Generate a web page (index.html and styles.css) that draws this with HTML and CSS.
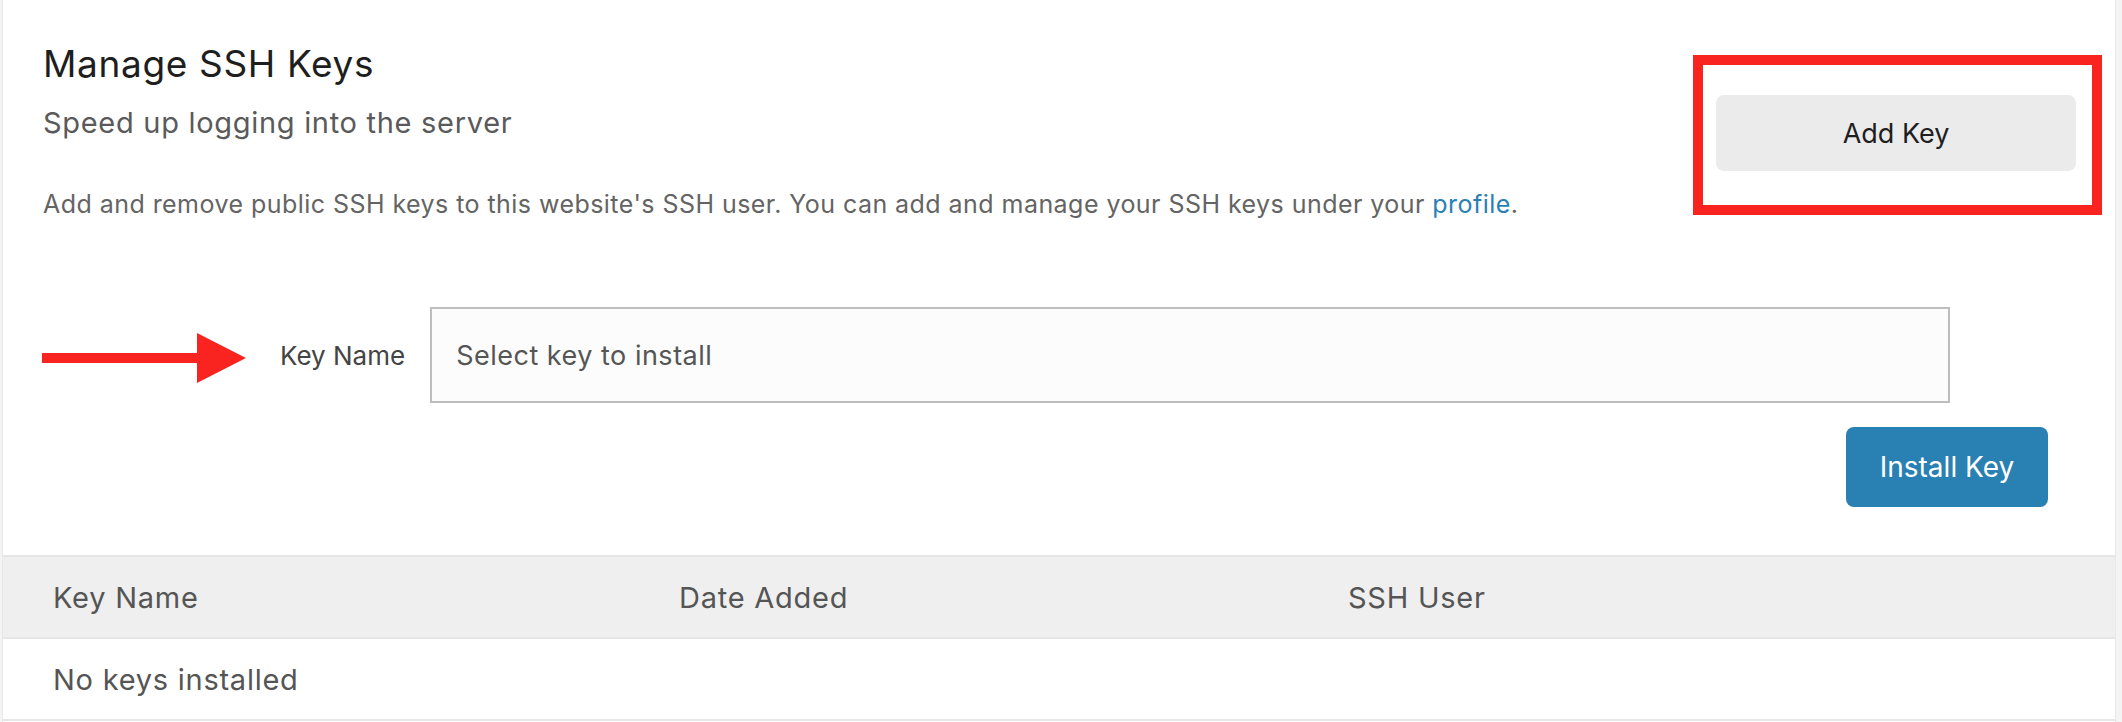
FILE: index.html
```html
<!DOCTYPE html>
<html lang="en">
<head>
<meta charset="utf-8">
<title>Manage SSH Keys</title>
<link rel="stylesheet" href="styles.css">
</head>
<body>
<div class="panel">
  <div class="head">
    <div class="intro">
      <h1 class="title">Manage SSH Keys</h1>
      <h2 class="subtitle">Speed up logging into the server</h2>
      <p class="desc">Add and remove public SSH keys to this website's SSH user. You can add and manage your SSH keys under your <a href="#" class="link">profile</a>.</p>
    </div>
    <div class="add-wrap">
      <button class="btn-add">Add Key</button>
      <div class="highlight"></div>
    </div>
  </div>

  <div class="form-row">
    <svg class="arrow" width="206" height="52" viewBox="0 0 206 52" aria-hidden="true">
      <rect x="0" y="21" width="156" height="10" fill="#f9231f"/>
      <polygon points="155,1 204,26 155,51" fill="#f9231f"/>
    </svg>
    <label class="field-label">Key Name</label>
    <div class="select">Select key to install</div>
  </div>

  <div class="actions">
    <button class="btn-install">Install Key</button>
  </div>

  <div class="table">
    <div class="tr th">
      <div class="cell">Key Name</div>
      <div class="cell">Date Added</div>
      <div class="cell">SSH User</div>
    </div>
    <div class="tr td">
      <div class="cell">No keys installed</div>
    </div>
  </div>
</div>
</body>
</html>
```
FILE: styles.css
```css
* { box-sizing: border-box; }
html, body { margin: 0; padding: 0; }
body {
  background: #f4f4f4;
  font-family: Inter, "Noto Sans", "Liberation Sans", sans-serif;
  width: 2122px;
  height: 722px;
  overflow: hidden;
}
.panel {
  margin-left: 2px;
  width: 2114px;
  height: 722px;
  background: #fff;
  border-left: 1px solid #e8e8e8;
  border-right: 1px solid #e8e8e8;
  display: flex;
  flex-direction: column;
}
.head {
  display: flex;
  justify-content: space-between;
  padding: 42px 39px 0 40px;
}
.intro { display: flex; flex-direction: column; }
.title {
  margin: 0;
  font-size: 37px;
  letter-spacing: 0.65px;
  line-height: 44px;
  font-weight: 400;
  color: #1e1e1e;
}
.subtitle {
  margin: 19px 0 0;
  font-size: 29px;
  letter-spacing: 0.7px;
  line-height: 36px;
  font-weight: 400;
  color: #5a5a5a;
}
.desc {
  margin: 47px 0 0;
  font-size: 25px;
  letter-spacing: 0.45px;
  line-height: 32px;
  color: #646464;
}
.link { color: #2a7fb5; text-decoration: none; }
.add-wrap { position: relative; margin-top: 53px; }
.btn-add {
  width: 360px;
  height: 76px;
  border: 0;
  border-radius: 8px;
  background: #ebebeb;
  color: #1e1e1e;
  font-family: inherit;
  font-size: 27px;
}
.highlight {
  position: absolute;
  left: -23px;
  top: -40px;
  width: 409px;
  height: 160px;
  border: 10px solid #f9231f;
}
.form-row {
  position: relative;
  display: flex;
  align-items: center;
  gap: 25px;
  margin-top: 87px;
  padding-left: 277px;
}
.arrow {
  position: absolute;
  left: 39px;
  top: 25px;
}
.field-label {
  font-size: 26px;
  color: #444;
}
.select {
  width: 1520px;
  height: 96px;
  border: 2px solid #bdbdbd;
  background: #fcfcfc;
  display: flex;
  align-items: center;
  padding-left: 24px;
  font-size: 27px;
  letter-spacing: 0.5px;
  color: #555;
}
.actions {
  display: flex;
  justify-content: flex-end;
  margin-top: 24px;
  padding-right: 67px;
}
.btn-install {
  width: 202px;
  height: 80px;
  border: 0;
  border-radius: 8px;
  background: #2980b2;
  color: #fff;
  font-family: inherit;
  font-size: 28px;
}
.table { margin-top: 48px; }
.tr {
  display: grid;
  grid-template-columns: 626px 669px 1fr;
  align-items: center;
  height: 82px;
  border-bottom: 2px solid #e6e6e6;
}
.th {
  height: 84px;
  background: #efefef;
  border-top: 2px solid #e6e6e6;
}
.cell {
  padding-left: 50px;
  font-size: 29px;
  letter-spacing: 0.75px;
  color: #555;
}
.td .cell { grid-column: 1 / span 2; }
```
